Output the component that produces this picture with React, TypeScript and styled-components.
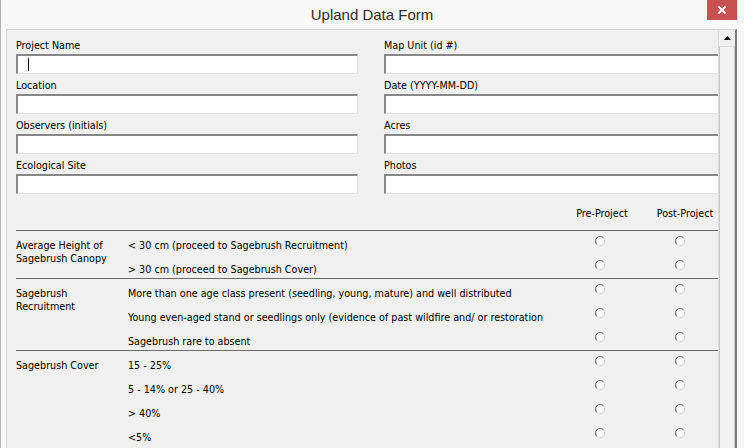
import React from "react"
import styled, { createGlobalStyle } from "styled-components"

const GlobalStyle = createGlobalStyle`
  html, body {
    margin: 0;
    padding: 0;
    overflow: hidden;
    background: #f9f9f9;
  }
`

const uiFont = `"DejaVu Sans Condensed", "DejaVu Sans", "Liberation Sans", sans-serif`

const Window = styled.div`
  width: 744px;
  height: 448px;
  box-sizing: border-box;
  display: grid;
  grid-template-rows: 29px minmax(0, 1fr);
  grid-template-columns: minmax(0, 1fr);
  background: #f9f9f9;
  border-left: 1px solid #b4b4b4;
  overflow: hidden;
`

const TitleBar = styled.div`
  display: grid;
  grid-template-columns: 1fr auto 1fr;
  align-items: start;
  padding: 0 7px 0 6px;
`

const Title = styled.div`
  grid-column: 2;
  padding-top: 6px;
  font-family: "Liberation Sans", Arial, sans-serif;
  font-size: 15px;
  line-height: 18px;
  color: #2d2d2d;
`

const CloseButton = styled.button`
  grid-column: 3;
  justify-self: end;
  width: 30px;
  height: 20px;
  padding: 0;
  border: none;
  background: #c75050;
  display: flex;
  align-items: center;
  justify-content: center;
`

const Body = styled.div`
  display: flex;
  min-height: 0;
  min-width: 0;
  padding-left: 5px;
`

const Viewport = styled.div`
  flex: 1;
  min-width: 0;
  overflow: hidden;
  background: #f0f0f0;
  border-left: 1px solid #d4d4d4;
  border-top: 1px solid #d4d4d4;
  font-family: ${uiFont};
  font-size: 10.7px;
  color: #000;
`

const Content = styled.div`
  width: 712px;
  padding: 9px 0 0 9px;
`

const FieldGrid = styled.div`
  display: grid;
  grid-template-columns: 342px 342px;
  column-gap: 26px;
`

const Field = styled.div`
  display: flex;
  flex-direction: column;
  gap: 2px;
  margin-bottom: 5px;
`

const Label = styled.label`
  line-height: 13px;
  height: 13px;
  white-space: nowrap;
`

const InputBox = styled.div`
  position: relative;
  height: 20px;
  box-sizing: border-box;
  background: #fff;
  border-style: solid;
  border-width: 2px 1px 1px 2px;
  border-color: #878787 #e3e3e3 #e3e3e3 #878787;
`

const Caret = styled.span`
  position: absolute;
  left: 10px;
  top: 2px;
  width: 1px;
  height: 13px;
  background: #000;
`

const TableHead = styled.div`
  display: grid;
  grid-template-columns: 112px 432px 80px 80px;
  height: 31px;
  padding-top: 8px;
  box-sizing: border-box;
  line-height: 13px;
`

const HeadCell = styled.div<{ $shift: number }>`
  text-align: center;
  white-space: nowrap;
  padding-left: ${({ $shift }) => $shift}px;
`

const Section = styled.div`
  display: grid;
  grid-template-columns: 112px 432px 80px 80px;
  grid-auto-rows: 24px;
  width: 704px;
  border-top: 1px solid #6a6a6a;
  margin-bottom: -1px;
`

const GroupLabel = styled.div<{ $rows: number }>`
  grid-row: 1 / span ${({ $rows }) => $rows};
  padding-top: 8px;
  line-height: 13px;
`

const OptionText = styled.div`
  padding-top: 8px;
  line-height: 13px;
  white-space: nowrap;
`

const RadioCell = styled.div`
  display: flex;
  justify-content: center;
  padding-top: 4px;
`

const Scrollbar = styled.div`
  width: 16px;
  display: flex;
  flex-direction: column;
  background: #f0f0f0;
  border-left: 1px solid #dcdcdc;
  border-right: 2px solid #7d7d7d;
  border-top: 1px solid #d4d4d4;
`

const ArrowButton = styled.div`
  height: 17px;
  box-sizing: border-box;
  display: flex;
  align-items: center;
  justify-content: center;
  border-bottom: 1px solid #dcdcdc;
  background: #f0f0f0;
`

const Thumb = styled.div`
  flex: 1;
  border-left: 1px solid #c8c8c8;
  border-right: 1px solid #c8c8c8;
  background: #f2f2f2;
`

const RightFrame = styled.div`
  width: 7px;
  background: #f9f9f9;
`

const Radio = () => (
  <svg width="12" height="12" viewBox="0 0 12 12">
    <circle cx="6" cy="6" r="4.6" fill="#fbfbfb" stroke="#d8d8d8" strokeWidth="1" />
    <path d="M2.75 9.25 A4.6 4.6 0 0 1 9.25 2.75" fill="none" stroke="#6c6c6c" strokeWidth="1.1" />
  </svg>
)

const fields: [string, string][] = [
  ["Project Name", "Map Unit (id #)"],
  ["Location", "Date (YYYY-MM-DD)"],
  ["Observers (initials)", "Acres"],
  ["Ecological Site", "Photos"],
]

const groups: { label: string[]; options: string[] }[] = [
  {
    label: ["Average Height of", "Sagebrush Canopy"],
    options: ["< 30 cm (proceed to Sagebrush Recruitment)", "> 30 cm (proceed to Sagebrush Cover)"],
  },
  {
    label: ["Sagebrush", "Recruitment"],
    options: [
      "More than one age class present (seedling, young, mature) and well distributed",
      "Young even-aged stand or seedlings only (evidence of past wildfire and/ or restoration",
      "Sagebrush rare to absent",
    ],
  },
  {
    label: ["Sagebrush Cover"],
    options: ["15 - 25%", "5 - 14% or 25 - 40%", "> 40%", "<5%"],
  },
]

export default function App() {
  return (
    <>
      <GlobalStyle />
      <Window>
        <TitleBar>
          <Title>Upland Data Form</Title>
          <CloseButton aria-label="Close">
            <svg width="10" height="10" viewBox="0 0 10 10">
              <path d="M1.5 1.5 L8.5 8.5 M8.5 1.5 L1.5 8.5" stroke="#fff" strokeWidth="1.8" />
            </svg>
          </CloseButton>
        </TitleBar>
        <Body>
          <Viewport>
            <Content>
              <FieldGrid>
                {fields.map(([left, right], i) => (
                  <React.Fragment key={left}>
                    <Field>
                      <Label>{left}</Label>
                      <InputBox>{i === 0 && <Caret />}</InputBox>
                    </Field>
                    <Field>
                      <Label>{right}</Label>
                      <InputBox />
                    </Field>
                  </React.Fragment>
                ))}
              </FieldGrid>
              <TableHead>
                <div />
                <div />
                <HeadCell $shift={4}>Pre-Project</HeadCell>
                <HeadCell $shift={10}>Post-Project</HeadCell>
              </TableHead>
              {groups.map((g) => (
                <Section key={g.label.join(" ")}>
                  <GroupLabel $rows={g.options.length}>
                    {g.label.map((l) => (
                      <div key={l}>{l}</div>
                    ))}
                  </GroupLabel>
                  {g.options.map((o, idx) => (
                    <React.Fragment key={o}>
                      <OptionText style={{ gridColumn: 2, gridRow: idx + 1 }}>{o}</OptionText>
                      <RadioCell style={{ gridColumn: 3, gridRow: idx + 1 }}>
                        <Radio />
                      </RadioCell>
                      <RadioCell style={{ gridColumn: 4, gridRow: idx + 1 }}>
                        <Radio />
                      </RadioCell>
                    </React.Fragment>
                  ))}
                </Section>
              ))}
            </Content>
          </Viewport>
          <Scrollbar>
            <ArrowButton>
              <svg width="7" height="4" viewBox="0 0 7 4">
                <path d="M0 4 L3.5 0 L7 4 Z" fill="#000" />
              </svg>
            </ArrowButton>
            <Thumb />
          </Scrollbar>
          <RightFrame />
        </Body>
      </Window>
    </>
  )
}
